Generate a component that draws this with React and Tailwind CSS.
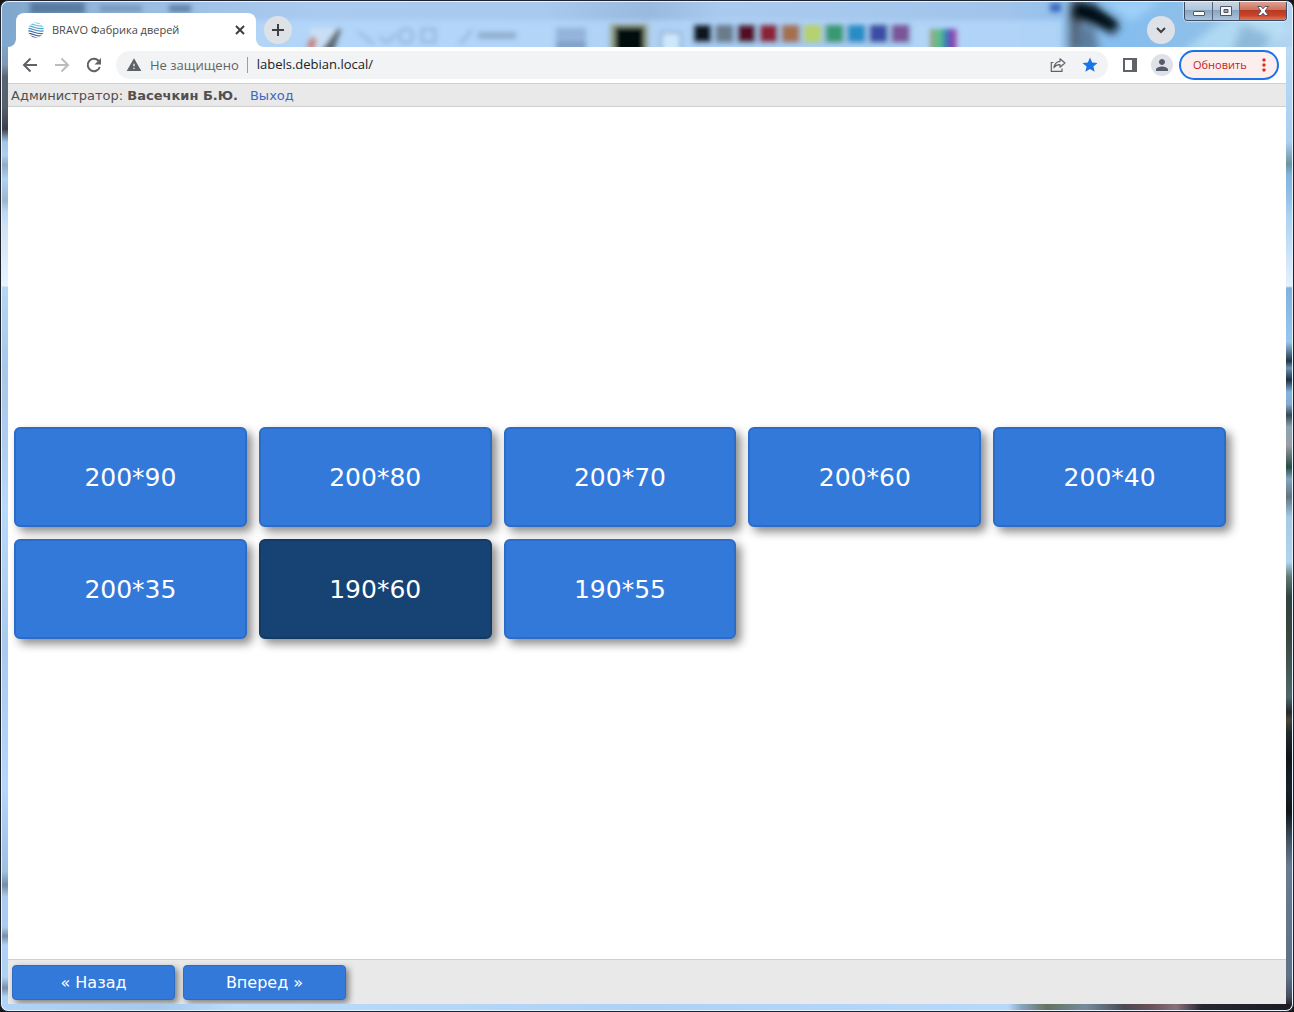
import React, { useState } from 'react';
import { MdMoreVert, MdPerson, MdStar, MdWarning } from 'react-icons/md';

const SIZES = ['200*90', '200*80', '200*70', '200*60', '200*40', '200*35', '190*60', '190*55'];

const SWATCHES = ['#10161c', '#677b8b', '#521024', '#882034', '#a37050', '#b6d26c', '#389870', '#288cc4', '#3a4ea2', '#7a5298'];

// blurred desktop seen through the glass title bar
const GlassBackdrop = () => (
  <svg className="absolute inset-0 h-full w-full" aria-hidden="true">
    <defs>
      <linearGradient id="glass" x1="0" x2="1" y1="0" y2="0">
        <stop offset="0" stopColor="#7fa6cc" />
        <stop offset="0.1" stopColor="#98bce0" />
        <stop offset="0.24" stopColor="#aacbf0" />
        <stop offset="0.42" stopColor="#a7caee" />
        <stop offset="0.5" stopColor="#98bade" />
        <stop offset="0.56" stopColor="#aacbf0" />
        <stop offset="0.78" stopColor="#a0c4ea" />
        <stop offset="0.87" stopColor="#84bdef" />
        <stop offset="0.95" stopColor="#93c0e6" />
        <stop offset="1" stopColor="#b4d5f2" />
      </linearGradient>
      <linearGradient id="spectrum" x1="0" x2="1" y1="0" y2="0">
        <stop offset="0" stopColor="#a09a80" />
        <stop offset="0.35" stopColor="#52c88c" />
        <stop offset="0.65" stopColor="#3c68c0" />
        <stop offset="0.85" stopColor="#8a3cb0" />
        <stop offset="1" stopColor="#b070b8" />
      </linearGradient>
      <filter id="soft" x="-50%" y="-50%" width="200%" height="200%">
        <feGaussianBlur stdDeviation="2.5" />
      </filter>
      <filter id="softer" x="-50%" y="-50%" width="200%" height="200%">
        <feGaussianBlur stdDeviation="4" />
      </filter>
    </defs>
    <rect width="100%" height="100%" fill="url(#glass)" />
    <rect x="250" y="18" width="810" height="34" fill="#b6d8fb" opacity="0.75" filter="url(#soft)" />
    <g filter="url(#soft)">
      <rect x="28" y="0" width="55" height="12" fill="#45658a" opacity="0.7" />
      <rect x="98" y="3" width="42" height="7" fill="#6484a8" opacity="0.6" />
      <rect x="167" y="3" width="22" height="7" fill="#42648c" opacity="0.7" />
      <path d="M308 26h30l-8 22h-22z" fill="#d8e6f4" opacity="0.6" />
      <path d="M304 46l6-12 5 4-3 10z" fill="#c88078" />
      <path d="M318 50l18-24 3 2-8 22z" fill="#5c6670" />
      <g fill="none" stroke="#7292bc" strokeWidth="2" opacity="0.6">
        <path d="M356 30l16 12M378 34q6 10 10 4l6-6" />
        <circle cx="404" cy="34" r="7" />
        <rect x="420" y="27" width="13" height="13" />
        <path d="M458 42l12-14" />
      </g>
      <rect x="476" y="30" width="38" height="7" fill="#7896b4" opacity="0.6" />
      <rect x="554" y="26" width="30" height="11" fill="#8aa8d0" opacity="0.75" />
      <rect x="554" y="38" width="30" height="12" fill="#7490bc" opacity="0.75" />
      <rect x="608" y="22" width="38" height="32" fill="#98a490" />
      <rect x="613" y="25" width="29" height="32" fill="#02080e" />
      <rect x="658" y="29" width="22" height="22" fill="#98b8d8" />
      <rect x="661" y="32" width="16" height="20" fill="#cfe8fc" />
      <rect x="690" y="22" width="220" height="22" fill="#84a6c8" opacity="0.35" />
      {SWATCHES.map((color, i) => (
        <rect key={color} x={692 + i * 22} y="23" width="17" height="17" fill={color} />
      ))}
      <rect x="928" y="27" width="27" height="28" fill="url(#spectrum)" />
      <rect x="1048" y="1" width="11" height="9" fill="#3c6cbc" />
    </g>
    <g filter="url(#softer)">
      <rect x="1068" y="-2" width="10" height="52" fill="#4c5864" />
      <path d="M1072 -2l20 4 26 18-6 12-24-10-20-6z" fill="#040a12" />
      <path d="M1076 22l16 4 6 24h-24z" fill="#5c7c9c" />
      <path d="M1100 -2h60l-30 22z" fill="#9fd0f8" />
      <path d="M1180 50l40-32 50-10 20 20-30 22z" fill="#bce2f6" opacity="0.7" />
      <path d="M1240 22l30 12-10 16h-30z" fill="#6897bd" opacity="0.5" />
    </g>
  </svg>
);

const BravoLogo = () => (
  <svg width="16" height="16" viewBox="0 0 16 16" aria-hidden="true">
    <defs>
      <clipPath id="disc"><circle cx="8" cy="8" r="7.8" /></clipPath>
    </defs>
    <g clipPath="url(#disc)" fill="none" strokeWidth="1.200">
      <path d="M-1 -1C5 -2 9 4 17 1" stroke="#8fd6e2" />
      <path d="M-1 1.500C5 .5 9 6.500 17 3.500" stroke="#5fbfd6" />
      <path d="M-1 4C5 3 9 9 17 6" stroke="#48a6cc" />
      <path d="M-1 6.500C5 5.500 9 11.500 17 8.500" stroke="#4690bc" />
      <path d="M-1 9C5 8 9 14 17 11" stroke="#446ea0" />
      <path d="M-1 11.500C5 10.500 9 16.500 17 13.500" stroke="#3e5488" />
      <path d="M-1 14C5 13 9 19 17 16" stroke="#3a4678" />
    </g>
  </svg>
);

// stroked glyph on a 16px grid
const Glyph = ({ d, size = 16, children }) => (
  <svg width={size} height={size} viewBox="0 0 16 16" fill="none" stroke="currentColor" strokeWidth="2" aria-hidden="true">
    <path d={d} />
    {children}
  </svg>
);

const ShareIcon = () => (
  <svg width="16" height="16" viewBox="0 0 16 16" fill="none" stroke="#5f6368" strokeWidth="1.2" aria-hidden="true">
    <path d="M3.500 5.500H1.300V14.300H12V11.500" />
    <path d="M10 1.800L14.900 6L10 10.200V7.700C7.300 7.600 5.300 8.500 3.900 10.700C4.300 7.300 6.300 4.800 10 4.300Z" strokeLinejoin="round" />
  </svg>
);

const SidePanelIcon = () => (
  <svg width="14" height="14" viewBox="0 0 14 14" aria-hidden="true">
    <path d="M0 0h14v14H0zM2 2v10h7V2z" fill="#5f6368" fillRule="evenodd" />
  </svg>
);

const WindowControls = () => (
  <div className="absolute -top-px right-[5px] flex h-5 overflow-hidden rounded-b-[4px] border border-t-0 border-[#3d4c60] shadow-[0_0_1px_1px_rgba(255,255,255,0.5)]">
    <button aria-label="Свернуть" className="flex w-7 items-center justify-center border-r border-[#52657d] bg-[linear-gradient(#c9d8e6_0%,#b2c7da_45%,#8ba5bf_50%,#a9c4dc_100%)]">
      <svg width="14" height="12" viewBox="0 0 14 12">
        <rect x="1.500" y="6.500" width="11" height="4" rx="0.500" fill="#fff" stroke="#535666" />
      </svg>
    </button>
    <button aria-label="Развернуть" className="flex w-[27px] items-center justify-center border-r border-[#52657d] bg-[linear-gradient(#c9d8e6_0%,#b2c7da_45%,#8ba5bf_50%,#a9c4dc_100%)]">
      <svg width="14" height="12" viewBox="0 0 14 12">
        <path d="M1.500 1.500h11v9h-11zM5 4.500v3h4v-3z" fill="#f4f6f8" fillRule="evenodd" stroke="#535666" />
      </svg>
    </button>
    <button aria-label="Закрыть окно" className="flex w-[46px] items-center justify-center bg-[linear-gradient(#e0a698_0%,#cf7361_45%,#b83a22_50%,#c8432a_75%,#dd7a58_100%)]">
      <svg width="14" height="12" viewBox="0 0 14 12">
        <path d="M1.500 1.500h3.500l2 2.300 2-2.300h3.500L9 6l3.500 4.500H9L7 8.200 5 10.500H1.500L5 6z" fill="#fff" stroke="#535666" strokeLinejoin="round" />
      </svg>
    </button>
  </div>
);

const TitleBar = () => (
  <header className="relative h-[45px] shrink-0">
    <GlassBackdrop />
    <div className="relative flex h-full items-end pl-[14px]">
      <div className="relative flex h-[34px] w-60 items-center rounded-t-lg bg-white pr-2 pl-3">
        <svg className="absolute bottom-0 -left-2" width="8" height="8" aria-hidden="true">
          <path d="M8 0v8H0a8 8 0 0 0 8-8z" fill="#fff" />
        </svg>
        <svg className="absolute -right-2 bottom-0" width="8" height="8" aria-hidden="true">
          <path d="M0 0v8h8a8 8 0 0 1-8-8z" fill="#fff" />
        </svg>
        <BravoLogo />
        <span className="ml-2 flex-1 truncate text-[11px] text-[#45494d]">BRAVO Фабрика дверей</span>
        <button aria-label="Закрыть вкладку" className="flex size-4 items-center justify-center text-[#3c4043]">
          <Glyph d="M4 4l8 8M12 4l-8 8" />
        </button>
      </div>
      <button aria-label="Новая вкладка" className="mb-[3px] ml-2 flex size-7 items-center justify-center rounded-full bg-[#dee1e6] text-[#3c4043]">
        <Glyph d="M8 2v12M2 8h12" />
      </button>
      <button aria-label="Поиск вкладок" className="mr-[117px] mb-[3px] ml-auto flex size-7 items-center justify-center rounded-full bg-[#dee1e6] text-[#3c4043]">
        <Glyph d="M4 6l4 4 4-4" />
      </button>
    </div>
    <WindowControls />
  </header>
);

const Toolbar = () => {
  const [url, setUrl] = useState('labels.debian.local/');

  return (
    <div className="flex h-9 shrink-0 items-center bg-white pr-[7px] pl-2 text-[#5f6368]">
      <div className="flex gap-1">
        <button aria-label="Назад" className="flex size-7 items-center justify-center">
          <Glyph d="M15 8H2.500M8.500 1.500L2 8l6.500 6.500" />
        </button>
        <button aria-label="Вперед" disabled className="flex size-7 items-center justify-center text-[#babcbe]">
          <Glyph d="M1 8h12.500M7.500 1.500L14 8l-6.500 6.500" />
        </button>
        <button aria-label="Обновить страницу" className="flex size-7 items-center justify-center">
          <Glyph d="M13.800 10a6.200 6.200 0 1 1-1.300-6.300L14 5.200">
            <path d="M15 1v6.500H8.500z" fill="currentColor" stroke="none" />
          </Glyph>
        </button>
      </div>

      <div className="ml-2 flex h-7 flex-1 items-center rounded-full bg-[#f1f3f4] pr-[9px] pl-[10px] text-[13px]">
        <MdWarning size={16} />
        <label htmlFor="url" className="ml-2 border-r border-[#9a9da1] pr-2 leading-4">Не защищено</label>
        <input
          id="url"
          value={url}
          onChange={(e) => setUrl(e.target.value)}
          className="ml-[9px] min-w-0 flex-1 bg-transparent text-[#202124] outline-none"
        />
        <button aria-label="Поделиться" className="mr-[15px]"><ShareIcon /></button>
        <button aria-label="Закладка" className="text-[#1a73e8]"><MdStar size={18} /></button>
      </div>

      <button aria-label="Боковая панель" className="ml-[15px]"><SidePanelIcon /></button>
      <button aria-label="Профиль" className="ml-[14px] flex size-[22px] items-center justify-center rounded-full bg-[#dee1e6] text-[#565c70]">
        <MdPerson size={18} />
      </button>
      <button className="ml-[6px] flex h-[30px] w-[100px] items-center justify-between rounded-full border-2 border-[#1a73e8] bg-[#fceeed] pr-[3px] pl-3 text-[11px] text-[#c5221f]">
        Обновить
        <MdMoreVert size={20} color="#d93025" />
      </button>
    </div>
  );
};

const SizeTile = ({ label, active, onSelect }) => (
  <button
    onClick={onSelect}
    aria-pressed={active}
    className={`h-[100px] rounded-md border-2 pt-[2px] text-[25px] text-white shadow-[5px_5px_10px_rgba(0,0,0,0.45)] ${
      active ? 'border-[#143a66] bg-[#174274]' : 'border-[#2d6cc6] bg-[#3379da]'
    }`}
  >
    {label}
  </button>
);

const NavButton = ({ children }) => (
  <button className="h-[35px] w-[163px] rounded border border-[#2d6cc6] bg-[#3379da] text-base text-white shadow-[3px_3px_6px_rgba(0,0,0,0.45)]">
    {children}
  </button>
);

const LabelsPage = () => {
  const [selected, setSelected] = useState('190*60');

  return (
    <div className="flex flex-1 flex-col bg-white font-['DejaVu_Sans',sans-serif]">
      <div className="flex h-6 items-center border-y border-[#d0d0d0] bg-[#e9e9e9] pt-[2px] pl-[3px] text-[13px] text-[#505050]">
        <span>Администратор: <b>Васечкин Б.Ю.</b></span>
        <a href="#logout" className="ml-3 text-[#3a68c4]">Выход</a>
      </div>

      <main className="flex flex-1 flex-col justify-center">
        <div className="grid grid-cols-5 gap-3 pr-[60px] pl-[6px]">
          {SIZES.map((size) => (
            <SizeTile key={size} label={size} active={size === selected} onSelect={() => setSelected(size)} />
          ))}
        </div>
      </main>

      <footer className="flex h-[45px] gap-2 border-t border-[#d0d0d0] bg-[#e9e9e9] px-1 pt-[5px]">
        <NavButton>« Назад</NavButton>
        <NavButton>Вперед »</NavButton>
      </footer>
    </div>
  );
};

const App = () => (
  <div className="min-h-screen bg-[#15161c] font-['Open_Sans',sans-serif]">
    <div className="flex min-h-screen flex-col rounded-lg border border-[#20222c] bg-[#e6f2fd] p-px">
      <div className="flex flex-1 flex-col overflow-clip rounded-md">
        <TitleBar />
        <div className="flex flex-1">
          <div className="w-[6px] bg-[linear-gradient(#7fa3c5_0px,#7d98b4_18px,#5a6472_30px,#555f6e_60px,#3c404c_82px,#9fc6e8_95px,#acd0f0_108px,#91abc8_118px,#acd2f2_132px,#9fb6cf_154px,#bcd8f4_165px,#d0e2f6_180px,#e8f3fe_239px,#b4d7f7_240px,#a7c8ea_320px,#aecfef_400px,#b8daf9_460px,#a8caed_600px,#b5d8fa_740px,#9cbfe2_825px,#758ba5_838px,#a9cdf0_850px,#a9cdf0_880px,#788eaa_889px,#aed2f5_898px,#aed2f5_930px,#788eaa_941px,#b0d4f8_950px)]" />
          <div className="flex min-w-0 flex-1 flex-col">
            <Toolbar />
            <LabelsPage />
          </div>
          <div className="w-[6px] bg-[linear-gradient(#b9dbf7_0px,#a9cff2_95px,#6e93a2_117px,#82b4df_128px,#94bfe8_150px,#abd3f3_170px,#e6f1fb_239px,#7fb2de_241px,#9ac6ec_295px,#203544_314px,#7092b0_321px,#1e3040_333px,#82b3da_345px,#84add0_357px,#344a50_368px,#8ea2b0_380px,#9a9fa5_398px,#294b42_420px,#84a4be_432px,#62757f_450px,#a5cae6_470px,#b0d4ee_515px,#5e786f_530px,#31433c_550px,#38463c_590px,#4f6669_650px,#24282b_665px,#474535_673px,#222a2c_685px,#10151a_710px,#182028_740px,#10161a_765px,#475566_795px,#697b91_820px,#5e7084_930px,#454b5b_950px,#28252f_957px)]" />
        </div>
        <div className="h-[6px] bg-[linear-gradient(90deg,#b0d4f8_0%,#a5c9ee_12%,#b9dbfc_18%,#aed2f6_50%,#b5d8fb_78%,#8aa5c0_79%,#66725f_81%,#758c9b_84%,#4c4854_87%,#6b4f58_89%,#8a7079_91%,#282631_93%,#1c1b24_100%)]" />
      </div>
    </div>
  </div>
);

export default App;
